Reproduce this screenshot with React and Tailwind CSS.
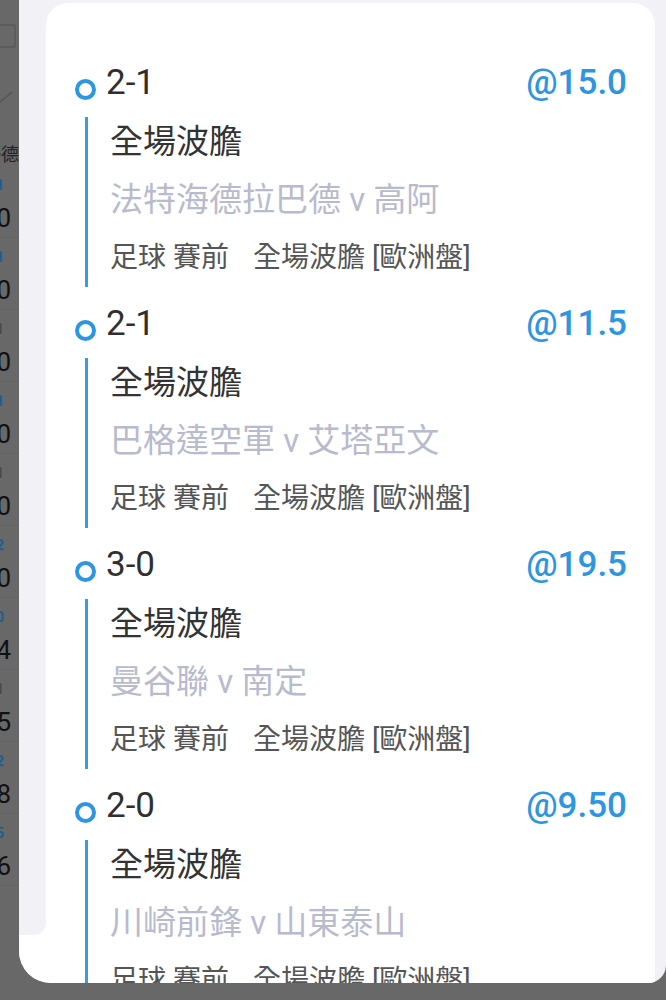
const font = { fontFamily: "Roboto, 'Noto Sans CJK TC', sans-serif" };

const bets = [
  { score: "2-1", odds: "@15.0", teams: "法特海德拉巴德 v 高阿" },
  { score: "2-1", odds: "@11.5", teams: "巴格達空軍 v 艾塔亞文" },
  { score: "3-0", odds: "@19.5", teams: "曼谷聯 v 南定" },
  { score: "2-0", odds: "@9.50", teams: "川崎前鋒 v 山東泰山" },
];

const sideRows = [
  { tag: "1", num: "1.80", tagColor: "text-[#1d5d91]" },
  { tag: "1", num: "2.20", tagColor: "text-[#1d5d91]" },
  { tag: "1", num: "3.30", tagColor: "text-[#4a4a4a]" },
  { tag: "1", num: "1.90", tagColor: "text-[#1d5d91]" },
  { tag: "1", num: "2.10", tagColor: "text-[#4a4a4a]" },
  { tag: "2", num: "3.40", tagColor: "text-[#1d5d91]" },
  { tag: "0", num: "1.74", tagColor: "text-[#1d5d91]" },
  { tag: "1", num: "2.05", tagColor: "text-[#4a4a4a]" },
  { tag: "2", num: "1.98", tagColor: "text-[#1d5d91]" },
  { tag: "5", num: "1.86", tagColor: "text-[#1d5d91]" },
];

function SideStrip() {
  return (
    <div className="w-[19px] shrink-0 overflow-hidden flex flex-col" style={font}>
      <div className="h-[24px]" />
      <div className="h-[24px] w-[30px] -ml-[14px] border-2 border-[#5c5c5c] rounded-[3px]" />
      <div className="h-[38px]" />
      <svg width="19" height="20" viewBox="0 0 19 20" className="shrink-0">
        <path d="M0 16 L12 6" stroke="#555" strokeWidth="1.5" fill="none" />
      </svg>
      <div className="h-[60px] flex justify-end items-end text-[18px] leading-[22px] text-[#222]">
        <span className="whitespace-nowrap">優德</span>
      </div>
      <div className="flex flex-col">
        {sideRows.map((r, i) => (
          <div key={i} className="h-[72px] border-b border-[#626262] flex flex-col justify-end pb-[4px]">
            <div className={`flex justify-end text-[14px] leading-[16px] font-bold ${r.tagColor} pr-[15px]`}>
              <span className="whitespace-nowrap">{r.tag}</span>
            </div>
            <div className="flex justify-end text-[26px] leading-[30px] text-[#111] pr-[8px] mt-[10px]">
              <span className="whitespace-nowrap">{r.num}</span>
            </div>
          </div>
        ))}
      </div>
    </div>
  );
}

function BetItem({ bet }) {
  return (
    <div className="mb-[13px]">
      <div className="flex items-center h-[48px]">
        <div className="w-[21px] h-[21px] rounded-full border-[4px] border-[#2e96e0] mt-[12px] shrink-0" />
        <div className="ml-[10px] text-[35px] leading-[48px] text-[#2f2f2f]">{bet.score}</div>
        <div className="ml-auto text-[35px] leading-[48px] font-medium text-[#2e96e0]">{bet.odds}</div>
      </div>
      <div className="ml-[10px] mt-[10px] border-l-[3px] border-[#3a9be2] pl-[22px] pb-[4px]">
        <div className="h-[50px] leading-[50px] text-[33px] text-[#333] whitespace-nowrap">全場波膽</div>
        <div className="h-[66px] leading-[66px] text-[33px] text-[#b8bacd] whitespace-nowrap">{bet.teams}</div>
        <div className="h-[50px] leading-[50px] text-[28px] text-[#555] whitespace-nowrap">
          <span>足球 賽前</span>
          <span className="ml-[24px]">全場波膽 [歐洲盤]</span>
        </div>
      </div>
    </div>
  );
}

export default function App() {
  return (
    <div className="w-[666px] h-[1000px] bg-[#686868] overflow-hidden flex items-start" style={font}>
      <SideStrip />
      <div className="flex-1 h-[983px] bg-[#f1f1f6] rounded-bl-[32px] rounded-br-[18px] overflow-hidden flex">
        <div className="w-[27px] shrink-0 bg-white flex flex-col">
          <div className="h-[935px] bg-[#f1f1f6] rounded-br-[12px]" />
        </div>
        <div className="flex-1 mt-[3px] mr-[11px] bg-white rounded-t-[22px] overflow-hidden pt-[56px] pl-[29px] pr-[28px]">
          {bets.map((b, i) => (
            <BetItem key={i} bet={b} />
          ))}
        </div>
      </div>
    </div>
  );
}
